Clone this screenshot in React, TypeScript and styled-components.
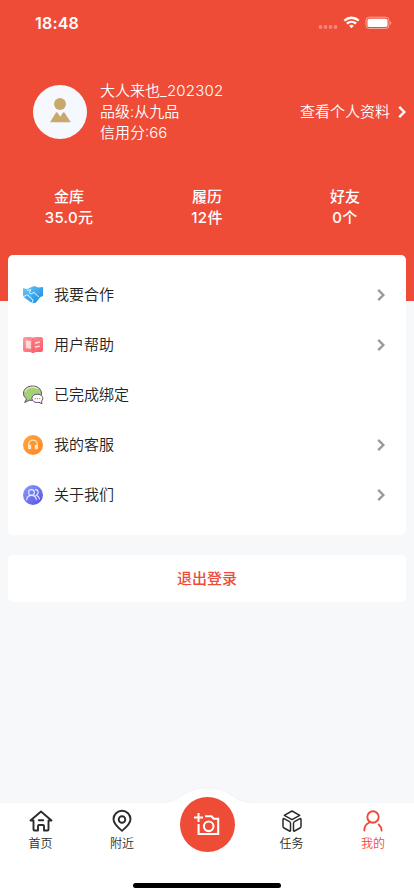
import React from "react";
import styled, { createGlobalStyle } from "styled-components";

const RED = "#ee4c37";

const GlobalStyle = createGlobalStyle`
  * { box-sizing: border-box; }
  html, body { margin: 0; padding: 0; }
  body {
    font-family: Inter, "Noto Sans CJK SC", sans-serif;
    font-size: 15px;
    font-weight: 350;
    color: #222;
    background: #f6f8fa;
  }
  svg { display: block; flex: none; }
`;

const Screen = styled.div`
  width: 414px;
  height: 896px;
  display: flex;
  flex-direction: column;
  overflow: hidden;
  background: #f6f8fa;
`;

const Header = styled.header`
  height: 301px;
  flex: none;
  background: ${RED};
  color: #fff;
`;

const StatusBar = styled.div`
  height: 46px;
  padding: 0 21px 0 35px;
  display: flex;
  align-items: center;
  justify-content: space-between;
`;

const Clock = styled.span`
  font-size: 16px;
  font-weight: 600;
  line-height: 20px;
  letter-spacing: 0.2px;
`;

const Profile = styled.div`
  height: 64px;
  margin-top: 34px;
  padding: 0 8px 0 33px;
  display: flex;
  align-items: center;
`;

const Avatar = styled.div`
  width: 54px;
  height: 54px;
  border-radius: 50%;
  background: #f5f8fd;
  overflow: hidden;
`;

const ProfileText = styled.div`
  flex: 1;
  margin-left: 13px;
  padding-bottom: 1px;
  line-height: 21px;
  white-space: nowrap;
`;

const Digits = styled.span`
  letter-spacing: 0.2px;
`;

const ProfileLink = styled.a`
  display: flex;
  align-items: center;
  gap: 8px;
  line-height: 21px;
`;

const LinkText = styled.span`
  padding-bottom: 1px;
`;

const Stats = styled.div`
  margin-top: 42px;
  display: grid;
  grid-template-columns: repeat(3, 1fr);
  text-align: center;
  line-height: 21px;
  font-weight: 500;
`;

const StatValue = styled.div`
  letter-spacing: 0.3px;
`;

const Panel = styled.section`
  position: relative;
  margin: -46px 8px 0;
  height: 280px;
  padding: 15px 21px 15px 14px;
  border-radius: 5px;
  background: #fff;
`;

const MenuRow = styled.div`
  height: 50px;
  display: flex;
  align-items: center;
`;

const MenuLabel = styled.span`
  flex: 1;
  margin-left: 10px;
  padding-bottom: 1px;
  line-height: 21px;
`;

const Logout = styled.button`
  margin: 20px 8px 0;
  padding: 0 0 2px;
  height: 47px;
  flex: none;
  border: 0;
  border-radius: 5px;
  background: #fff;
  color: ${RED};
  font: inherit;
  font-weight: 500;
`;

const TabBar = styled.nav`
  position: relative;
  margin-top: auto;
  height: 94px;
  flex: none;
  background: #fff;
  border-top: 1px solid #f3f4f6;
  display: grid;
  grid-template-columns: 81px 82px 88px 81px 82px;
`;

const Hump = styled.svg`
  position: absolute;
  left: 163px;
  top: -16px;
`;

const Tab = styled.div<{ $active?: boolean }>`
  padding-top: 6px;
  display: flex;
  flex-direction: column;
  align-items: center;
  gap: 2px;
  font-size: 12px;
  line-height: 18px;
  color: ${(p) => (p.$active ? RED : "#2c2c2c")};
`;

const TabIcon = styled.svg<{ $weight?: number }>`
  width: 24px;
  height: 24px;
  fill: none;
  stroke: currentColor;
  stroke-width: ${(p) => p.$weight ?? 1.9};
  stroke-linejoin: round;
  stroke-linecap: round;
`;

const PublishButton = styled.div`
  position: relative;
  justify-self: center;
  width: 55px;
  height: 55px;
  margin-top: -6px;
  border-radius: 50%;
  background: ${RED};
  display: flex;
  align-items: center;
  justify-content: center;
`;

const HomeIndicator = styled.div`
  position: absolute;
  left: 133px;
  bottom: 8px;
  width: 148px;
  height: 5px;
  border-radius: 3px;
  background: #000;
`;

const Chevron = ({ color }: { color: string }) => (
  <svg width="8" height="12" viewBox="0 0 8 12" fill="none" stroke={color} strokeWidth="2.4">
    <path d="M1.2 .9 6.3 6 1.2 11.100" />
  </svg>
);

const StatusIcons = () => (
  <svg width="75" height="14" viewBox="0 0 75 14">
    <g fill="#fff" opacity=".32">
      <circle cx="2.500" cy="11" r="1.900" />
      <circle cx="7.500" cy="11" r="1.900" />
      <circle cx="12.500" cy="11" r="1.900" />
      <circle cx="17.500" cy="11" r="1.900" />
    </g>
    <g fill="none" stroke="#fff" strokeWidth="2.300">
      <path d="M26.300 4.600c4.200-3.800 10.200-3.800 14.400 0" />
      <path d="M28.900 7.600c2.700-2.400 6.500-2.400 9.200 0" />
    </g>
    <path d="M31.200 9.700a3.500 3.500 0 0 1 4.600 0L33.500 12.300z" fill="#fff" />
    <rect x="48" y="1.200" width="23" height="11.300" rx="3.300" fill="none" stroke="#fff" opacity=".5" />
    <rect x="49.500" y="2.700" width="20" height="8.300" rx="1.800" fill="#fff" />
    <path d="M72.200 5.200c1.600.6 1.600 3 0 3.600z" fill="#fff" opacity=".5" />
  </svg>
);

const Person = () => (
  <svg width="54" height="54" viewBox="0 0 54 54" fill="#c9a86c">
    <circle cx="27" cy="19" r="6" />
    <path d="M17 37.300 23 27.600q.7-.8 1.400 0l2.800 4.100 2.800-4.100q.7-.8 1.400 0L37.800 37.300z" />
  </svg>
);

const Handshake = () => (
  <svg width="22" height="22" viewBox="0 0 22 22">
    <defs>
      <linearGradient id="shake" x2="1" y2="1">
        <stop stopColor="#69c8fa" />
        <stop offset="1" stopColor="#1489df" />
      </linearGradient>
    </defs>
    <path
      d="M1 4.300 5.200 5 12 2l4.500 1.600L21 3v9l-2.600 1-4.600 5.800-3.300.4-6.700-4.500L1 12.500z"
      fill="url(#shake)"
    />
    <path
      d="M5.200 6.200 9 5.800 7.400 8.200q.3 2 2.200 1.600l2.400-1.400 4.600 4.400"
      fill="none"
      stroke="#e9f7ff"
      strokeWidth="1"
      strokeLinecap="round"
    />
    <path
      d="M0 12.600 3 12l1.800-1.200 1.900.6.500 1.500 1.500.5.500 1.500 1.600.7.200 1.400-1.300 2.200"
      fill="none"
      stroke="#fff"
      strokeWidth=".9"
    />
    <path d="M1.300 14.500 4 17.800l3.600 2L2 20z" fill="#fff" />
  </svg>
);

const Book = () => (
  <svg width="22" height="22" viewBox="0 0 22 22">
    <defs>
      <linearGradient id="book" x2="1" y2="1">
        <stop stopColor="#ff9a9c" />
        <stop offset="1" stopColor="#fb5665" />
      </linearGradient>
    </defs>
    <path d="M3 3h6l2 .8L13 3h6q2 0 2 2v11q0 2-2 2h-5l-3 1.300L8 18H3q-2 0-2-2V5q0-2 2-2z" fill="url(#book)" />
    <path d="M3.800 6.200 8.800 7v8l-5-1z" fill="#ffdcdc" />
    <path d="M11 4v15" stroke="#f8596a" strokeWidth=".8" />
    <path d="M13 9.200 17.800 8M13 13l4.800-.8" stroke="#ffdcdc" strokeWidth="1.400" />
  </svg>
);

const Chat = () => (
  <svg width="22" height="22" viewBox="0 0 22 22" stroke="#6e4378" strokeWidth="1">
    <path d="M10.500 2C5.300 2 1.500 5.200 1.500 9.300c0 2.300 1.100 4.200 3 5.500L2.700 18.500l4.600-2.300c6.800 1.100 12.400-1.900 12.200-7C19.300 5 15.600 2 10.500 2z" fill="#a4d177" />
    <path d="M3 8C4 3.500 12 1.500 16 5" fill="none" stroke="#d5efb9" strokeWidth="1.200" />
    <path d="M15.300 10.200c-3.100 0-5.400 1.700-5.400 4.200s2.400 4.200 5.400 4.100l1.700-.2 3 1.400-.5-2.500c3-3 .6-7-4.200-7z" fill="#fff" />
    <path d="M12.600 14.600h5.800" stroke="#8dc267" strokeWidth="1.300" strokeDasharray="1.300 .95" />
  </svg>
);

const Headset = () => (
  <svg width="22" height="22" viewBox="0 0 22 22">
    <defs>
      <linearGradient id="headset" x2="1" y2="1">
        <stop stopColor="#ffa63a" />
        <stop offset="1" stopColor="#ff8526" />
      </linearGradient>
    </defs>
    <circle cx="11" cy="11" r="10" fill="url(#headset)" />
    <path d="M6.600 13v-2.400a4.400 4.400 0 0 1 8.800 0V13" fill="none" stroke="#ffe8c7" strokeWidth="1.300" />
    <rect x="6" y="10.700" width="3.200" height="4.600" rx="1" fill="#ffe8c7" />
    <rect x="12.800" y="10.700" width="3.200" height="4.600" rx="1" fill="#ffe8c7" />
  </svg>
);

const Team = () => (
  <svg width="22" height="22" viewBox="0 0 22 22">
    <defs>
      <linearGradient id="team" x2="1" y2="1">
        <stop stopColor="#88a0ff" />
        <stop offset="1" stopColor="#574ee0" />
      </linearGradient>
    </defs>
    <circle cx="11" cy="11" r="10" fill="url(#team)" />
    <g fill="none" stroke="#e8eaff" strokeWidth="1.100" strokeLinecap="round">
      <circle cx="9.500" cy="8.500" r="2.900" />
      <path d="M4.700 15.700c.2-2.500 2-4.300 4.800-4.300s4.600 1.800 4.800 4.300M13.500 5.600c3.300.2 3.600 4.600.7 5.600 2 .6 3 2 3.300 3.700" />
    </g>
  </svg>
);

const menu = [
  { label: "我要合作", icon: <Handshake />, arrow: true },
  { label: "用户帮助", icon: <Book />, arrow: true },
  { label: "已完成绑定", icon: <Chat />, arrow: false },
  { label: "我的客服", icon: <Headset />, arrow: true },
  { label: "关于我们", icon: <Team />, arrow: true },
];

const stats = [
  { label: "金库", value: "35.0元" },
  { label: "履历", value: "12件" },
  { label: "好友", value: "0个" },
];

export default function App() {
  return (
    <Screen>
      <GlobalStyle />
      <Header>
        <StatusBar>
          <Clock>18:48</Clock>
          <StatusIcons />
        </StatusBar>
        <Profile>
          <Avatar>
            <Person />
          </Avatar>
          <ProfileText>
            <div>
              大人来也<Digits>_202302</Digits>
            </div>
            <div>品级:从九品</div>
            <div>信用分:66</div>
          </ProfileText>
          <ProfileLink>
            <LinkText>查看个人资料</LinkText>
            <Chevron color="#fff" />
          </ProfileLink>
        </Profile>
        <Stats>
          {stats.map((s) => (
            <div key={s.label}>
              <div>{s.label}</div>
              <StatValue>{s.value}</StatValue>
            </div>
          ))}
        </Stats>
      </Header>
      <Panel>
        {menu.map((m) => (
          <MenuRow key={m.label}>
            {m.icon}
            <MenuLabel>{m.label}</MenuLabel>
            {m.arrow && <Chevron color="#999" />}
          </MenuRow>
        ))}
      </Panel>
      <Logout>退出登录</Logout>
      <TabBar>
        <Hump width="88" height="18" viewBox="0 0 88 18">
          <path d="M0 15.500C9 15.500 14 12 20 8 34-1.600 54-1.600 68 8c6 4 11 7.500 20 7.500V18H0z" fill="#fff" />
          <path d="M0 15.300C9 15.300 14 12 20 8 34-1.600 54-1.600 68 8c6 4 11 7.300 20 7.300" fill="none" stroke="#eeeff2" strokeWidth=".7" />
        </Hump>
        <Tab>
          <TabIcon viewBox="0 0 24 24">
            <path d="M12 2.500 1.500 11.500h3v9q0 1 1 1H9v-4.500q0-1 1-1h4q1 0 1 1v4.500h3.500q1 0 1-1v-9h3zM9.800 11.300h4.400" />
          </TabIcon>
          首页
        </Tab>
        <Tab>
          <TabIcon viewBox="0 0 24 24">
            <path d="M12 21.800C8 18.500 3.500 15 3.500 10.300a8.500 8.500 0 0 1 17 0C20.500 15 16 18.500 12 21.800z" />
            <circle cx="12" cy="10.500" r="3.300" />
          </TabIcon>
          附近
        </Tab>
        <PublishButton>
          <svg width="28" height="26" viewBox="0 0 28 26" fill="none" stroke="#fff" strokeWidth="2.100">
            <path d="M1 5.500h9M5.500 1v9M12 4.200h6.500l2.200 2.500h4.500V22H5.600V12" />
            <circle cx="15.700" cy="14.300" r="4.800" />
          </svg>
        </PublishButton>
        <Tab>
          <TabIcon viewBox="0 0 24 24" $weight={1.5}>
            <path d="m12 2 7.700 4.400-7.700 4.300-7.700-4.300z" />
            <path d="M3 10.200q0-1 1-.5l5.500 3q1 .5 1 1.500v7.300q0 1-1 .5L4 19q-1-.5-1-1.500zM21 10.200q0-1-1-.5l-5.500 3q-1 .5-1 1.500v7.300q0 1 1 .5L20 19q1-.5 1-1.500z" />
          </TabIcon>
          任务
        </Tab>
        <Tab $active>
          <TabIcon viewBox="0 0 24 24">
            <circle cx="12" cy="8" r="5.700" />
            <path d="M3.300 21.500c0-3.700 1.800-6.500 5-8M17.700 15.500c1.800 1.600 2.700 3.600 2.900 6" />
          </TabIcon>
          我的
        </Tab>
        <HomeIndicator />
      </TabBar>
    </Screen>
  );
}
